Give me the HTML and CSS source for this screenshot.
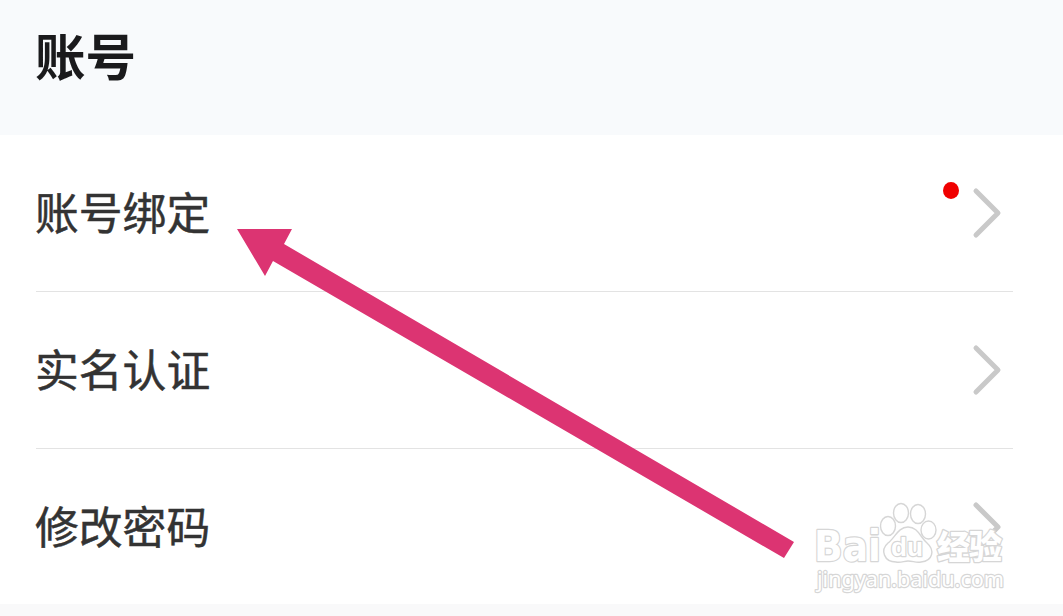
FILE: index.html
```html
<!DOCTYPE html>
<html lang="zh-CN">
<head>
  <meta charset="UTF-8">
  <meta name="viewport" content="width=device-width, initial-scale=1.0">
  <title>账号</title>
  <link rel="stylesheet" href="styles.css">
</head>
<body>
  <div class="page">
    <h1 class="title">账号</h1>

    <ul class="list">
      <li class="item">
        <span class="label">账号绑定</span>
        <span class="dot"></span>
        <svg class="chevron" viewBox="0 0 30 52"><path d="M4 4 L26 26 L4 48"/></svg>
      </li>
      <li class="item">
        <span class="label">实名认证</span>
        <svg class="chevron" viewBox="0 0 30 52"><path d="M4 4 L26 26 L4 48"/></svg>
      </li>
      <li class="item">
        <span class="label">修改密码</span>
        <svg class="chevron" viewBox="0 0 30 52"><path d="M4 4 L26 26 L4 48"/></svg>
      </li>
    </ul>

    <!-- Pointer to the first row -->
    <svg class="arrow" viewBox="0 0 558 330">
      <path d="M0 0 H55 L47 15 L557 313 L547 329 L36 32 L28 47 Z"/>
    </svg>

    <!-- Watermark -->
    <svg class="watermark" viewBox="0 0 200 100">
      <text class="brand" x="14" y="71" textLength="67" lengthAdjust="spacingAndGlyphs">Bai</text>
      <g class="paw">
        <ellipse cx="88" cy="36" rx="7.5" ry="9.5"/>
        <ellipse cx="101" cy="23" rx="7.5" ry="9.5"/>
        <ellipse cx="118" cy="24" rx="7.5" ry="9.5"/>
        <ellipse cx="128.5" cy="40" rx="7.5" ry="9"/>
        <path d="M108 37 C98 37 95 48 88 53 C80 60 84 72 96 72 C101 73 104 71 108 71 C113 71 116 73 121 72 C133 71 135 60 127 53 C120 47 118 37 108 37 Z"/>
      </g>
      <text class="du" x="91" y="66" textLength="32" lengthAdjust="spacingAndGlyphs">du</text>
      <text class="brand-cn" x="137" y="69" textLength="65">经验</text>
      <text class="site" x="17" y="97" textLength="187" lengthAdjust="spacingAndGlyphs">jingyan.baidu.com</text>
    </svg>
  </div>
</body>
</html>
```
FILE: styles.css
```css
* {
  box-sizing: border-box;
}
body {
  margin: 0;
  background: #f9f9fa;
  font-family: "Noto Sans CJK SC", sans-serif;
}
.page {
  position: relative;
  height: 616px;
  overflow: hidden;
}
.title {
  height: 135px;
  margin: 0;
  padding: 17px 35px 0;
  background: #f8fafc;
  color: #1a1a1c;
  font-size: 50.5px;
  font-weight: 700;
  line-height: 74px;
}
.list {
  margin: 0;
  padding: 0 50px 0 36px;
  list-style: none;
  background: #fff;
}
.item {
  display: flex;
  align-items: center;
  height: 157px;
  padding-right: 11px;
  border-bottom: 1px solid #e3e3e3;
}
.item:last-child {
  height: 155px;
  border-bottom: none;
}
.label {
  margin-left: -1px;
  margin-right: auto;
  padding-bottom: 4px;
  color: #333;
  font-size: 43.8px;
  line-height: 64px;
  -webkit-text-stroke: 0.5px #333;
}
.dot {
  width: 16px;
  height: 17px;
  margin: 0 13px 45px 0;
  border-radius: 50%;
  background: #f00000;
}
.chevron {
  width: 30px;
  height: 52px;
  fill: none;
  stroke: #c9c9c9;
  stroke-width: 5;
  stroke-linecap: round;
  stroke-linejoin: round;
}
.arrow {
  position: absolute;
  left: 237px;
  top: 229px;
  width: 558px;
  height: 330px;
  fill: #dc3472;
}
.watermark {
  position: absolute;
  left: 800px;
  top: 490px;
  width: 200px;
  height: 100px;
  overflow: visible;
  fill: #fff;
  stroke: #d6d6d6;
  stroke-width: 1.4;
  stroke-linejoin: round;
}
.watermark text {
  paint-order: stroke;
}
.brand {
  font: bold 43px "DejaVu Sans", sans-serif;
  stroke-width: 2.6;
}
.du {
  font: bold 26px "Liberation Sans", sans-serif;
  stroke-width: 2.4;
}
.brand-cn {
  font: 900 33px "Noto Sans CJK SC", sans-serif;
  stroke-width: 2.6;
}
.site {
  font: 21px "Noto Sans", sans-serif;
  stroke-width: 2.4;
}
```
